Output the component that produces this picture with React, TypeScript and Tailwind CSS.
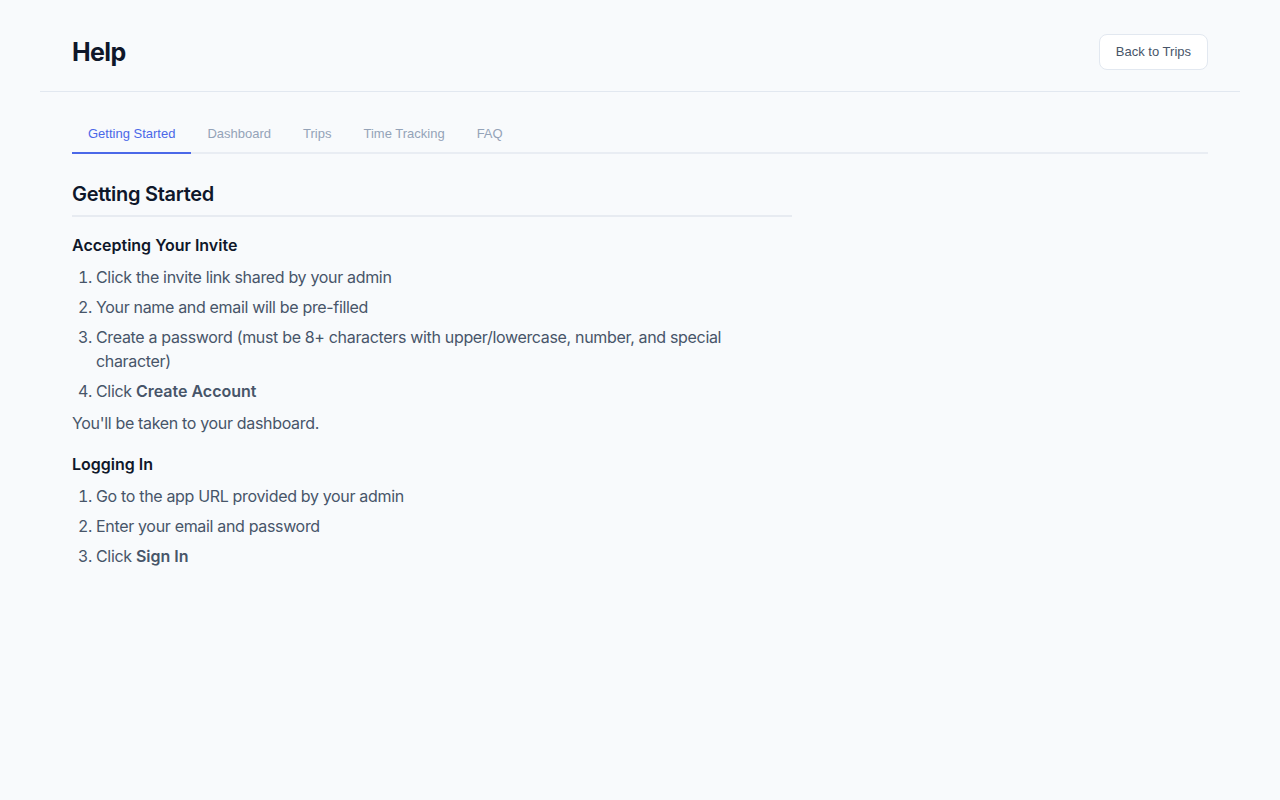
import React, { useState } from 'react';

const tabs = ['Getting Started', 'Dashboard', 'Trips', 'Time Tracking', 'FAQ'];

function Step({ children }: { children: React.ReactNode }) {
  return <li className="mb-1.5 leading-6">{children}</li>;
}

export default function App() {
  const [active, setActive] = useState('Getting Started');

  return (
    <div className="min-h-screen bg-[#f8fafc] font-['Liberation_Sans',Arial,sans-serif]">
      <div className="max-w-[1200px] mx-auto">
        {/* Page header */}
        <header className="flex items-center justify-between px-8 pt-[34px] pb-[21px] border-b border-[#e2e8f0]">
          <h1 className="text-[25px] font-bold tracking-tight text-[#0f172a] leading-[26px] font-['Inter',sans-serif]">
            Help
          </h1>
          <button className="h-9 px-4 bg-white border border-[#e2e8f0] rounded-lg text-[13px] text-[#475569]">
            Back to Trips
          </button>
        </header>

        <main className="px-8 pt-[28px]">
          {/* Tabs */}
          <nav className="flex border-b-2 border-[#e9edf3]">
            {tabs.map((t) => (
              <button
                key={t}
                onClick={() => setActive(t)}
                className={
                  t === active
                    ? 'px-4 pt-[4px] pb-[8px] -mb-[2px] text-[13px] text-[#4b68e8] border-b-2 border-[#4b68e8]'
                    : 'px-4 pt-[4px] pb-[8px] -mb-[2px] text-[13px] text-[#94a3b8] border-b-2 border-transparent'
                }
              >
                {t}
              </button>
            ))}
          </nav>

          {/* Section content */}
          <section className="max-w-[720px] pt-[26px] font-['Inter',sans-serif] text-[16px] tracking-[-0.33px] text-[#475569]">
            <h2 className="text-[20px] font-semibold tracking-[-0.3px] text-[#0f172a] leading-7 pb-[7px] border-b-2 border-[#e7ebf1]">
              Getting Started
            </h2>

            <h3 className="mt-[16px] mb-[8px] font-semibold tracking-normal text-[#0f172a] leading-6">
              Accepting Your Invite
            </h3>
            <ol className="list-decimal pl-6">
              <Step>Click the invite link shared by your admin</Step>
              <Step>Your name and email will be pre-filled</Step>
              <Step>
                Create a password (must be 8+ characters with upper/lowercase, number, and special character)
              </Step>
              <Step>
                Click <strong className="font-semibold tracking-normal">Create Account</strong>
              </Step>
            </ol>
            <p className="mt-[8px] leading-6">You'll be taken to your dashboard.</p>

            <h3 className="mt-[17px] mb-[8px] font-semibold tracking-normal text-[#0f172a] leading-6">
              Logging In
            </h3>
            <ol className="list-decimal pl-6">
              <Step>Go to the app URL provided by your admin</Step>
              <Step>Enter your email and password</Step>
              <Step>
                Click <strong className="font-semibold tracking-normal">Sign In</strong>
              </Step>
            </ol>
          </section>
        </main>
      </div>
    </div>
  );
}
